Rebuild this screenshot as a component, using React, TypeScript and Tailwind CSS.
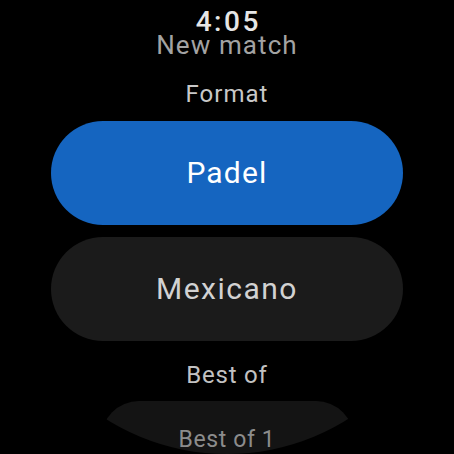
import React from 'react'

const font = { fontFamily: 'Roboto, "Noto Sans", sans-serif' }

export default function App() {
  return (
    <div className="w-[454px] h-[454px] bg-black" style={font}>
      <div className="relative w-[454px] h-[454px] rounded-full overflow-hidden bg-black">
        <div className="absolute top-[6px] left-0 right-0 flex justify-center z-10">
          <span className="text-[28px] leading-[32px] font-medium text-[#e6e6e6] tracking-[2.5px] pl-[2.5px]">4:05</span>
        </div>

        <div className="flex flex-col items-center">
          <div className="h-[70px] pt-[20px] flex items-center justify-center">
            <span className="text-[26px] leading-none text-[#a3a3a3] tracking-[1.1px]">New match</span>
          </div>
          <div className="h-[48px] flex items-center justify-center">
            <span className="text-[24px] leading-none text-[#c8c8c8] tracking-[1px]">Format</span>
          </div>

          <div className="mt-[3px] flex flex-col gap-[12px]">
            <button className="w-[352px] h-[104px] rounded-full bg-[#1565c0] flex items-center justify-center">
              <span className="text-[30px] leading-none text-white tracking-[1.2px]">Padel</span>
            </button>
            <button className="w-[352px] h-[104px] rounded-full bg-[#1b1b1b] flex items-center justify-center">
              <span className="text-[30px] leading-none text-[#d2d2d2] tracking-[1.5px]">Mexicano</span>
            </button>
          </div>

          <div className="h-[60px] pt-[8px] flex items-center justify-center">
            <span className="text-[24px] leading-none text-[#c2c2c2] tracking-[0.8px]">Best of</span>
          </div>

          <div className="w-[253px] h-[76px] rounded-full bg-[#141414] flex items-center justify-center">
            <span className="text-[23px] leading-none text-[#8c8c8c] tracking-[0.6px]">Best of 1</span>
          </div>
        </div>
      </div>
    </div>
  )
}
